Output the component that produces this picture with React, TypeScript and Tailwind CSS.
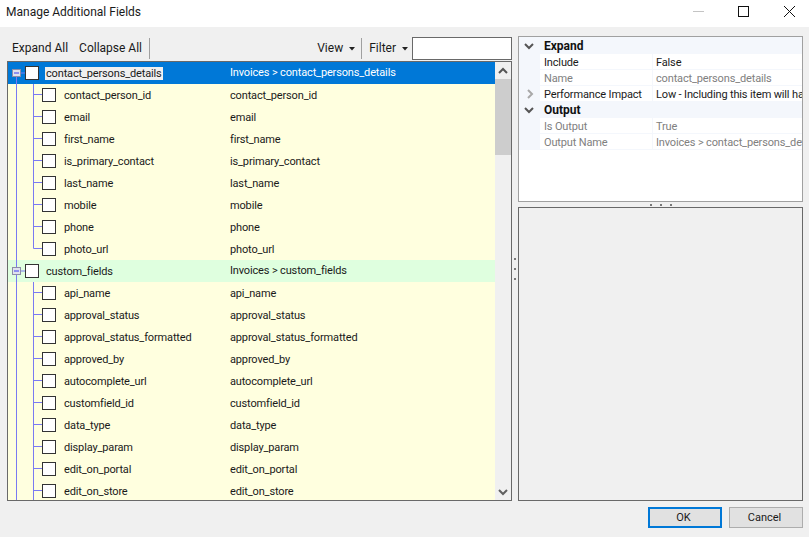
const font = { fontFamily: 'Roboto, "Liberation Sans", sans-serif' };

type Field = { name: string; path?: string; last?: boolean };

const contactFields = ['contact_person_id', 'email', 'first_name', 'is_primary_contact', 'last_name', 'mobile', 'phone', 'photo_url'];
const customFields = [
  'api_name',
  'approval_status',
  'approval_status_formatted',
  'approved_by',
  'autocomplete_url',
  'customfield_id',
  'data_type',
  'display_param',
  'edit_on_portal',
  'edit_on_store',
];

const LINE = '#7a7af2';

function Checkbox() {
  return <span className="block h-[14px] w-[14px] shrink-0 border border-[#333333] bg-white" />;
}

function ParentLines({ first }: { first?: boolean }) {
  return (
    <svg width="17" height="22" className="shrink-0">
      {!first && <path d="M8.5 0V7" stroke={LINE} />}
      <path d="M8.5 15V22M13 11H17" stroke={LINE} />
      <rect x="4.5" y="7.5" width="8" height="7" fill="#dfe3ee" stroke="#8d8da8" />
      <path d="M6 11H11" stroke="#3d3df0" />
    </svg>
  );
}

function ChildLines({ last }: { last?: boolean }) {
  return (
    <svg width="34" height="22" className="shrink-0">
      <path d="M8.5 0V22" stroke={LINE} />
      <path d={last ? 'M25.5 0V10.5H34' : 'M25.5 0V22M25.5 10.5H34'} stroke={LINE} fill="none" />
    </svg>
  );
}

function ChildRow({ name, last }: Field) {
  return (
    <div className="flex h-[22px] shrink-0 items-center bg-[#ffffdf] text-[11px] tracking-[-0.15px] text-[#1a1a1a]">
      <div className="flex w-[222px] shrink-0 items-center">
        <ChildLines last={last} />
        <Checkbox />
        <span className="ml-[8px] pt-[2px]">{name}</span>
      </div>
      <span className="pt-[2px]">{name}</span>
    </div>
  );
}

function ParentRow({ name, path, first, selected }: Field & { first?: boolean; selected?: boolean }) {
  return (
    <div className={`flex h-[22px] shrink-0 items-center text-[11px] tracking-[-0.15px] ${selected ? 'bg-[#0078d7] text-white' : 'bg-[#dfffdf] text-[#1a1a1a]'}`}>
      <div className="flex w-[222px] shrink-0 items-center">
        <ParentLines first={first} />
        <Checkbox />
        <span className={`ml-[6px] flex h-[13px] items-center px-px leading-[13px] ${selected ? 'bg-[#f0f0f0] text-[#1a1a1a]' : ''}`}>{name}</span>
      </div>
      <span>{path}</span>
    </div>
  );
}

function Chevron({ dir, color = '#555555', size = 10 }: { dir: 'up' | 'down' | 'right'; color?: string; size?: number }) {
  const d = dir === 'up' ? 'M1 7L5 3L9 7' : dir === 'down' ? 'M1 3L5 7L9 3' : 'M3 1L7 5L3 9';
  return (
    <svg width={size} height={size} viewBox="0 0 10 10" className="shrink-0">
      <path d={d} fill="none" stroke={color} strokeWidth="2" />
    </svg>
  );
}

function Caret() {
  return (
    <svg width="6" height="4" className="shrink-0">
      <path d="M0 0H6L3 3.5Z" fill="#222222" />
    </svg>
  );
}

function Separator() {
  return <span className="block h-[21px] w-px shrink-0 bg-[#a0a0a0]" />;
}

function GridHeader({ label, first }: { label: string; first?: boolean }) {
  return (
    <div className={`flex shrink-0 items-center bg-[#f4f7fc] text-[12px] font-bold text-[#111111] ${first ? 'h-[17px]' : 'h-[16px]'}`}>
      <span className="flex w-[25px] shrink-0 justify-center pr-[6px]">
        <Chevron dir="down" />
      </span>
      <span>{label}</span>
    </div>
  );
}

function GridRow({ label, value, muted, expandable }: { label: string; value: string; muted?: boolean; expandable?: boolean }) {
  return (
    <div className={`flex h-[16px] shrink-0 text-[11px] leading-[16px] tracking-[-0.15px] ${muted ? 'text-[#808080]' : 'text-[#1a1a1a]'}`}>
      <span className="flex w-[21px] shrink-0 items-center justify-center bg-[#f4f7fc]">
        {expandable && <Chevron dir="right" color="#a8a8a8" />}
      </span>
      <span className="w-[113px] shrink-0 whitespace-nowrap border-b border-r border-[#f4f7fc] pl-[4px] pt-px leading-[15px]">{label}</span>
      <span className="min-w-0 flex-1 overflow-hidden whitespace-nowrap border-b border-[#f4f7fc] pl-[3px] pt-px leading-[15px]">{value}</span>
    </div>
  );
}

function Dots({ vertical }: { vertical?: boolean }) {
  return (
    <div className={`flex items-center justify-center gap-[8px] ${vertical ? 'flex-col' : ''}`}>
      <span className="h-[2px] w-[2px] bg-[#777777]" />
      <span className="h-[2px] w-[2px] bg-[#777777]" />
      <span className="h-[2px] w-[2px] bg-[#777777]" />
    </div>
  );
}

export default function App() {
  return (
    <div className="flex h-[537px] w-[809px] flex-col overflow-hidden bg-[#f0f0f0] text-[#1a1a1a]" style={font}>
      <div className="flex h-[27px] shrink-0 items-center justify-between bg-white pb-[3px] pl-[6px] text-[12px]">
        <span>Manage Additional Fields</span>
        <div className="flex h-full items-start">
          <svg width="46" height="24"><path d="M1 11.5H12" stroke="#c4c4c4" /></svg>
          <svg width="46" height="24"><rect x="0.5" y="6.5" width="10" height="10" fill="none" stroke="#111111" /></svg>
          <svg width="25" height="24"><path d="M0 6L11 17M11 6L0 17" stroke="#111111" /></svg>
        </div>
      </div>

      <div className="flex min-h-0 flex-1 pl-[7px] pr-[6px] pt-[9px]">
        <div className="flex w-[505px] shrink-0 flex-col">
          <div className="flex h-[25px] shrink-0 items-center text-[12px]">
            <span className="ml-[5px] pb-px">Expand All</span>
            <span className="ml-[11px] pb-px">Collapse All</span>
            <span className="ml-[7px]"><Separator /></span>
            <span className="ml-auto pb-px">View</span>
            <span className="ml-[6px]"><Caret /></span>
            <span className="ml-[6px]"><Separator /></span>
            <span className="ml-[7px] pb-px">Filter</span>
            <span className="ml-[6px]"><Caret /></span>
            <input className="ml-[4px] h-[23px] w-[100px] border border-[#696969] bg-white" />
          </div>
          <div className="flex h-[440px] shrink-0 overflow-hidden border border-[#696969] bg-white">
            <div className="flex min-w-0 flex-1 flex-col overflow-hidden">
              <ParentRow name="contact_persons_details" path="Invoices > contact_persons_details" first selected />
              {contactFields.map((name, i) => (
                <ChildRow key={name} name={name} last={i === contactFields.length - 1} />
              ))}
              <ParentRow name="custom_fields" path="Invoices > custom_fields" />
              {customFields.map((name) => (
                <ChildRow key={name} name={name} />
              ))}
            </div>
            <div className="flex w-[16px] shrink-0 flex-col items-center bg-[#f0f0f0]">
              <div className="flex h-[17px] shrink-0 items-center justify-center"><Chevron dir="up" /></div>
              <div className="h-[76px] w-full shrink-0 bg-[#cdcdcd]" />
              <div className="flex-1" />
              <div className="flex h-[17px] shrink-0 items-center justify-center"><Chevron dir="down" color="#606060" /></div>
            </div>
          </div>
        </div>

        <div className="flex w-[6px] shrink-0 items-center justify-center"><Dots vertical /></div>

        <div className="flex w-[285px] shrink-0 flex-col">
          <div className="flex h-[166px] shrink-0 flex-col border border-[#a0a0a0] bg-white">
            <GridHeader label="Expand" first />
            <GridRow label="Include" value="False" />
            <GridRow label="Name" value="contact_persons_details" muted />
            <GridRow label="Performance Impact" value="Low - Including this item will have no impact" expandable />
            <GridHeader label="Output" />
            <GridRow label="Is Output" value="True" muted />
            <GridRow label="Output Name" value="Invoices > contact_persons_details" muted />
          </div>
          <div className="flex h-[5px] shrink-0 items-center justify-center"><Dots /></div>
          <div className="min-h-0 flex-1 border border-[#696969] bg-[#f0f0f0]" />
        </div>
      </div>

      <div className="flex h-[36px] shrink-0 items-start justify-end gap-[7px] pr-[6px] pt-[6px] text-[11px]">
        <button className="h-[21px] w-[74px] border-2 border-[#0078d7] bg-[#e1e1e1] pr-[3px] leading-[17px]">OK</button>
        <button className="h-[21px] w-[74px] border border-[#adadad] bg-[#e1e1e1] pr-[3px] leading-[19px]">Cancel</button>
      </div>
    </div>
  );
}
